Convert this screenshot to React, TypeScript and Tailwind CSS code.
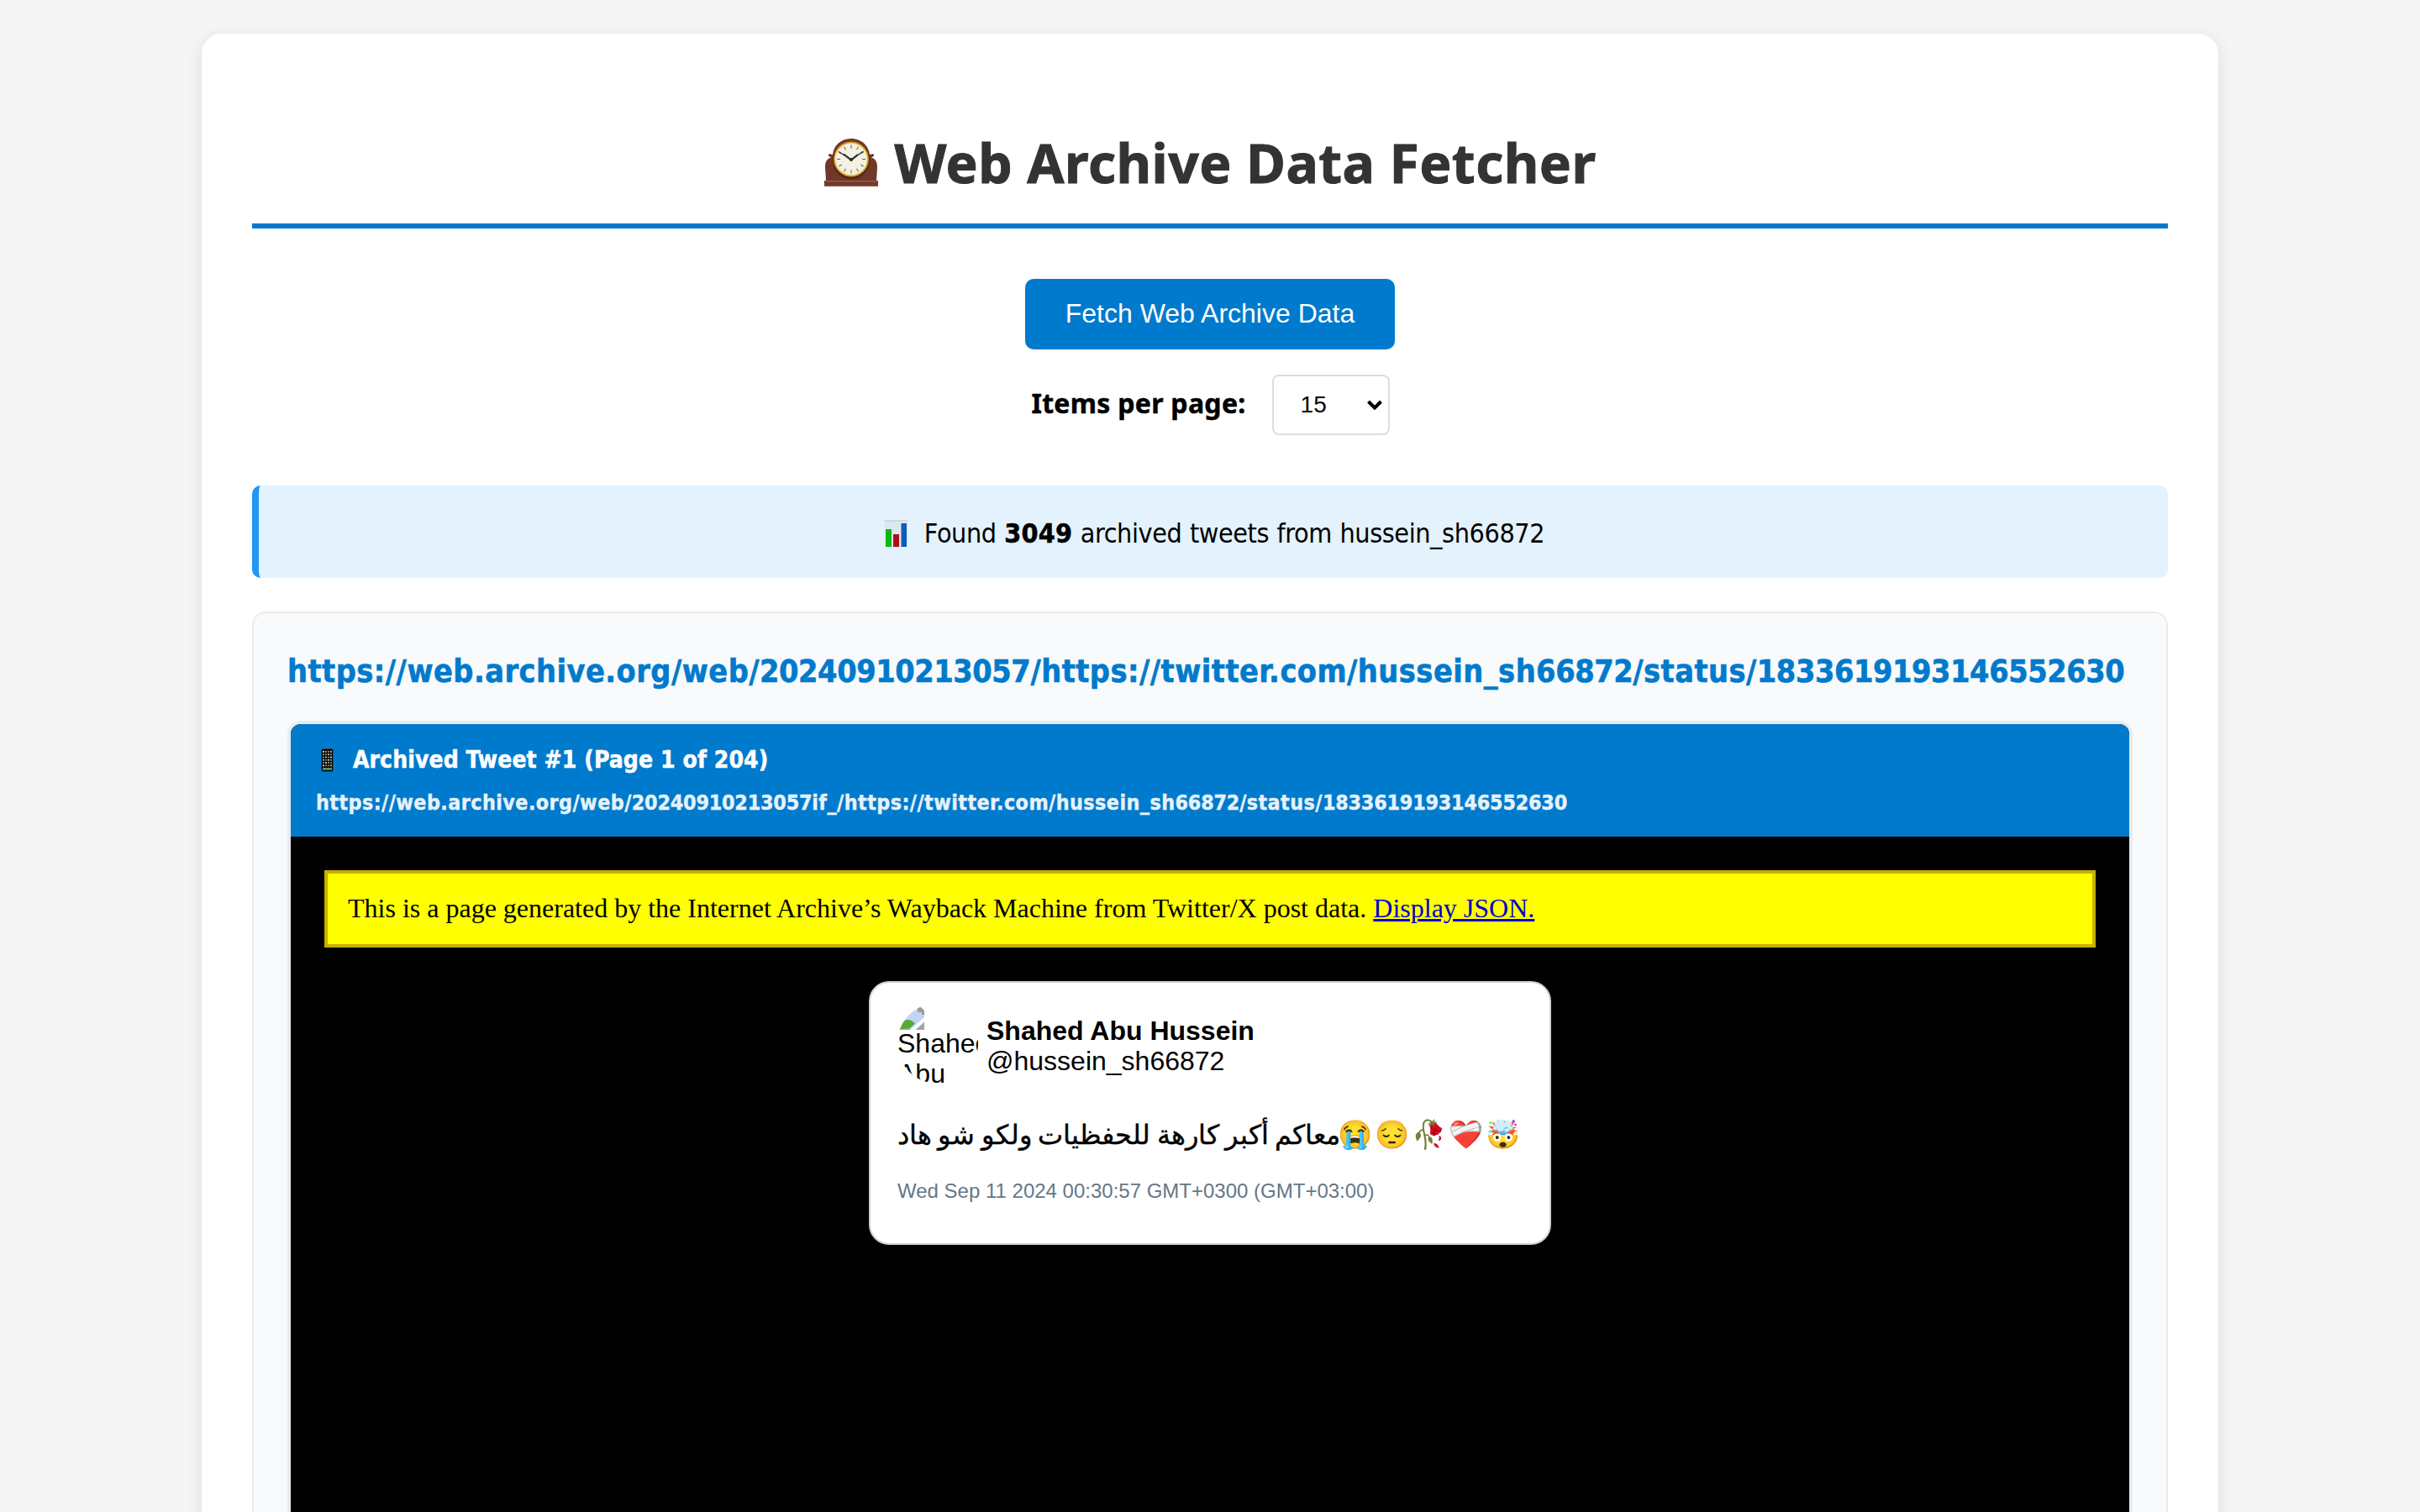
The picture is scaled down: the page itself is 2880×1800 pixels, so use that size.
import * as React from "react"

const tweet = {
  name: "Shahed Abu Hussein",
  handle: "@hussein_sh66872",
  text: "معاكم أكبر كارهة للحفظيات ولكو شو هاد",
  emojis: ["😭", "😔", "🥀", "❤️‍🩹", "🤯"],
  date: "Wed Sep 11 2024 00:30:57 GMT+0300 (GMT+03:00)",
}

function MantelClock() {
  const ticks = Array.from({ length: 12 }, (_, i) => i * 30)
  return (
    <svg viewBox="0 0 64 57" className="h-[57px] w-[64px] shrink-0">
      <path
        d="M32 0C45 0 53 9 54 19l2.500-.500c2-.800 3.500.800 2 2.500l-2.500 1.500c5 1.500 7 5.500 7 11.500L62 50h2v7H0v-7h2L1 34c0-6 2-10 7-11.500L5.500 21c-1.500-1.700 0-3.300 2-2.500L10 19C11 9 19 0 32 0z"
        fill="#713729"
      />
      <path d="M1 50h62v1.500H1z" fill="#9a5b48" />
      <path d="M0 55.500h64V57H0z" fill="#8f5040" />
      <circle cx="32" cy="26" r="22" fill="#4f2118" />
      <circle cx="32" cy="24.500" r="21" fill="#c9951c" />
      <circle cx="32" cy="24.500" r="19.800" fill="#e9c54a" />
      <circle cx="32" cy="24.500" r="18.800" fill="#f4f0e2" />
      {ticks.map((t) => (
        <path key={t} d="M32 7.500v4" stroke="#6d6a60" strokeWidth="1.100" transform={`rotate(${t} 32 24.500)`} />
      ))}
      <path d="M17 15.500L32 25l14.500-10" stroke="#2c2c28" strokeWidth="1.200" fill="none" />
      <path d="M23 18.500l9 7 8-6.500" stroke="#2c2c28" strokeWidth="2.200" fill="none" />
      <circle cx="32" cy="25" r="2" fill="#2c2c28" />
    </svg>
  )
}

function BarChartIcon() {
  return (
    <svg viewBox="0 0 27 32" className="h-8 w-[27px] shrink-0">
      <path d="M0 0h27v32H0z" fill="#dde7ee" />
      <path d="M0 0h27v2H0z" fill="#cfd9df" />
      <path d="M1 11h7v21H1z" fill="#0db814" />
      <path d="M10 17h7v15h-7z" fill="#b50d18" />
      <path d="M19.500 4h6.500v28h-6.500z" fill="#0f5cb8" />
    </svg>
  )
}

function PhoneIcon() {
  const colors = ["#d9d9d9", "#e0704e", "#4aa3e0", "#63c074", "#e3c45a"]
  return (
    <svg viewBox="0 0 15 28" className="h-7 w-[15px] shrink-0">
      <rect width="15" height="28" rx="2" fill="#4c5350" />
      <rect x=".8" y=".8" width="13.400" height="26.400" rx="1.500" fill="#07090d" />
      {Array.from({ length: 24 }, (_, i) => (
        <rect
          key={i}
          x={2 + (i % 4) * 3}
          y={3 + Math.floor(i / 4) * 3.3}
          width="1.900"
          height="1.700"
          fill={colors[(i * 3 + Math.floor(i / 4)) % 5]}
        />
      ))}
      <rect x="2" y="23.300" width="11" height="2.200" fill="#5fb08a" />
    </svg>
  )
}

// Mirrors the browser's own placeholder for an image that failed to load
function BrokenImage() {
  return (
    <svg viewBox="0 0 32 32" className="block size-8">
      <path d="M2 4h24l6 6v22H2z" fill="#c3d3f4" />
      <path d="M24 4h3l5 5v5h-3v-3h-5z" fill="#9a9a9a" />
      <path d="M2 31c2-7 6-11 10-11s7 2 9 4.500L14 31H2z" fill="#54ad33" />
      <path d="M15 32L32 17v5L21 32z" fill="#fff" />
      <path d="M2 30.500h13V32H2zM22 32l10-9v9z" fill="#a3a3a3" />
    </svg>
  )
}

// Digits are set a little tighter than the letters around them
function Url({ value, digitClass }: { value: string; digitClass: string }) {
  return (
    <>
      {value.split(/(\d+)/).map((part, i) =>
        i % 2 ? (
          <span key={i} className={digitClass}>{part}</span>
        ) : (
          <React.Fragment key={i}>{part}</React.Fragment>
        )
      )}
    </>
  )
}

function TweetCard() {
  return (
    <div className="mx-auto mt-10 h-[314px] w-[812px] rounded-[24px] border-2 border-[#d0d0d0] bg-white px-8 pt-6 font-['Liberation_Sans',sans-serif] text-[32px] leading-9 text-black">
      <div className="flex gap-[10px]">
        <div className="size-24 shrink-0 overflow-hidden rounded-full">
          <BrokenImage />
          <p className="-mt-0.5 w-24">Shahed Abu</p>
        </div>
        <div className="pt-[15px] whitespace-nowrap">
          <p className="font-bold">{tweet.name}</p>
          <p>{tweet.handle}</p>
        </div>
      </div>

      <div className="mt-[41px] flex h-10 items-center">
        <p className="w-[525px] whitespace-nowrap text-[32px] leading-10 [-webkit-text-stroke:0.4px_black] [word-spacing:-1.5px]">
          {tweet.text}
        </p>
        <div className="-ml-px flex text-[33px]">
          {tweet.emojis.map((e) => (
            <span key={e} className="w-11 whitespace-nowrap">{e}</span>
          ))}
        </div>
      </div>

      <p className="mt-8 whitespace-nowrap text-[24px] leading-[30px] text-[#657786]">{tweet.date}</p>
    </div>
  )
}

function ArchivedFrame() {
  return (
    <div className="mt-[37px] h-[1200px] overflow-hidden rounded-[16px] border-4 border-[#e9ecef] bg-black">
      <div className="h-[134px] bg-[#007acc] px-[30px] pt-[26px] font-bold text-white">
        <div className="flex items-center pl-1.5">
          <PhoneIcon />
          <p className="ml-[23px] whitespace-nowrap text-[28px] leading-[34px] tracking-[0.1px] [-webkit-text-stroke:0.5px_white]">
            Archived Tweet #1 (Page 1 of 204)
          </p>
        </div>
        <p className="mt-[19px] whitespace-nowrap text-[24.800px] leading-[30px] tracking-[0.450px] opacity-90 [-webkit-text-stroke:0.4px_white]">
          <Url
            value="https://web.archive.org/web/20240910213057if_/https://twitter.com/hussein_sh66872/status/1833619193146552630"
            digitClass="tracking-[-0.200px]"
          />
        </p>
      </div>
      <div className="p-10">
        <div className="h-[92px] border-4 border-[#c8b000] bg-[#ffff00] px-6 pt-[23px] font-['Liberation_Serif',serif] text-[32px] leading-9 text-black">
          This is a page generated by the Internet Archive’s Wayback Machine from Twitter/X post data.{" "}
          <a href="#" className="text-[#0000cc] underline">Display JSON.</a>
        </div>
        <TweetCard />
      </div>
    </div>
  )
}

export default function App() {
  return (
    <div className="h-[1800px] w-[2880px] overflow-hidden bg-[#f5f5f5] pt-10 font-['DejaVu_Sans_Condensed','DejaVu_Sans',sans-serif] text-black">
      <div className="mx-auto h-[2200px] w-[2400px] rounded-[24px] bg-white px-[60px] pt-[114px] shadow-[0_4px_20px_rgba(0,0,0,0.1)]">
        <h1 className="flex h-[118px] justify-center gap-[19px] border-b-[6px] border-[#007acc] pl-px font-['Noto_Sans',sans-serif] text-[64px] leading-[80px] font-bold tracking-[0.5px] text-[#333] [-webkit-text-stroke:1px_#333]">
          <div className="pt-[11px]">
            <MantelClock />
          </div>
          Web Archive Data Fetcher
        </h1>

        <button className="mx-auto mt-[60px] flex h-[84px] w-[440px] items-center justify-center rounded-[10px] bg-[#007acc] pb-0.5 font-['Liberation_Sans',sans-serif] text-[32px] leading-9 text-white">
          Fetch Web Archive Data
        </button>

        <div className="mt-[30px] flex h-[72px] items-center justify-center gap-[31px] pl-px">
          <label className="pb-1 font-['Noto_Sans',sans-serif] text-[32px] leading-10 font-bold tracking-[0.3px] [-webkit-text-stroke:0.5px_black]">
            Items per page:
          </label>
          <div className="flex h-[72px] w-[140px] items-center justify-between rounded-[8px] border-2 border-[#ddd] pr-[7px] pl-[32px] font-['Liberation_Sans',sans-serif] text-[28px] leading-9">
            15
            <svg viewBox="0 0 18 12" className="h-3 w-[18px]">
              <path d="M1.500 2L9 9.500 16.500 2" fill="none" stroke="#000" strokeWidth="4" />
            </svg>
          </div>
        </div>

        <div className="mt-[60px] flex h-[110px] items-center justify-center rounded-[10px] border-l-8 border-[#2196f3] bg-[#e3f2fd] pt-[3px] pl-[3px] text-[32px] leading-10 tracking-[-0.4px] [word-spacing:0.8px]">
          <BarChartIcon />
          <p className="ml-5 whitespace-nowrap">
            Found <strong className="tracking-[0.2px] [-webkit-text-stroke:0.5px_black]">3049</strong> archived tweets from hussein_sh66872
          </p>
        </div>

        <div className="mt-10 rounded-[16px] border-2 border-[#ebebeb] bg-[#f8fafc] px-10 pt-[47px]">
          <h3 className="whitespace-nowrap text-[37.440px] leading-[44px] font-bold tracking-[0.5px] text-[#007acc] [-webkit-text-stroke:0.6px_#007acc]">
            <Url
              value="https://web.archive.org/web/20240910213057/https://twitter.com/hussein_sh66872/status/1833619193146552630"
              digitClass="tracking-[-0.400px]"
            />
          </h3>
          <ArchivedFrame />
        </div>
      </div>
    </div>
  )
}
